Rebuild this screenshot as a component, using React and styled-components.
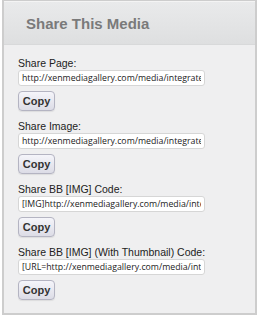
import React from 'react';
import styled, { createGlobalStyle } from 'styled-components';

const Global = createGlobalStyle`
    html, body {
        margin: 0;
        padding: 0;
        background: #fff;
    }
    body {
        font-family: 'Liberation Sans', Arial, sans-serif;
    }
`;

const Panel = styled.div`
    width: 251px;
    height: 312px;
    margin-left: 2px;
    border: 2px solid #cdcdcd;
    border-top-width: 1px;
    background: #efeff0;
    display: flex;
    flex-direction: column;
`;

const Head = styled.div`
    height: 44px;
    display: flex;
    align-items: center;
    padding: 1px 0 0 22px;
    background: linear-gradient(#e9eaeb, #dedfe0);
    border-top: 1px solid #f4f4f4;
    border-bottom: 1px solid #d8d9da;
    box-sizing: border-box;
`;

const Title = styled.h3`
    margin: 0;
    font-size: 15px;
    font-weight: bold;
    color: #7a7a7a;
`;

const Body = styled.div`
    padding: 12px 0 0 14px;
    display: flex;
    flex-direction: column;
`;

const Field = styled.div`
    display: flex;
    flex-direction: column;
    align-items: flex-start;
    margin-bottom: 9px;
`;

const Label = styled.label`
    font-size: 10.5px;
    line-height: 13px;
    color: #222;
`;

const Input = styled.input`
    width: 187px;
    height: 16px;
    box-sizing: border-box;
    margin: 0;
    padding: 0 3px;
    border: 1px solid #d6d6d6;
    border-radius: 3px;
    background: #fff;
    font-family: 'Open Sans', sans-serif;
    font-size: 8.75px;
    color: #222;
    outline: none;
`;

const CopyButton = styled.button`
    margin-top: 5px;
    width: 37px;
    height: 20px;
    padding: 0;
    border: 1px solid #b4b4c2;
    border-radius: 4px;
    background: linear-gradient(#f5f5fa, #dcdce6);
    box-shadow: 0 1px 1px rgba(0, 0, 0, 0.08);
    font-family: 'Liberation Sans', Arial, sans-serif;
    font-size: 11px;
    font-weight: bold;
    color: #333;
`;

const shares = [
    { label: 'Share Page:', value: 'http://xenmediagallery.com/media/integrated-search.1/' },
    { label: 'Share Image:', value: 'http://xenmediagallery.com/media/integrated-search.1/full' },
    { label: 'Share BB [IMG] Code:', value: '[IMG]http://xenmediagallery.com/media/integrated-search.1/full[/IMG]' },
    {
        label: 'Share BB [IMG] (With Thumbnail) Code:',
        value: '[URL=http://xenmediagallery.com/media/integrated-search.1/]',
    },
];

const App = () => (
    <>
        <Global />
        <Panel>
            <Head>
                <Title>Share This Media</Title>
            </Head>
            <Body>
                {shares.map((s) => (
                    <Field key={s.label}>
                        <Label>{s.label}</Label>
                        <Input readOnly value={s.value} />
                        <CopyButton>Copy</CopyButton>
                    </Field>
                ))}
            </Body>
        </Panel>
    </>
);

export default App;
